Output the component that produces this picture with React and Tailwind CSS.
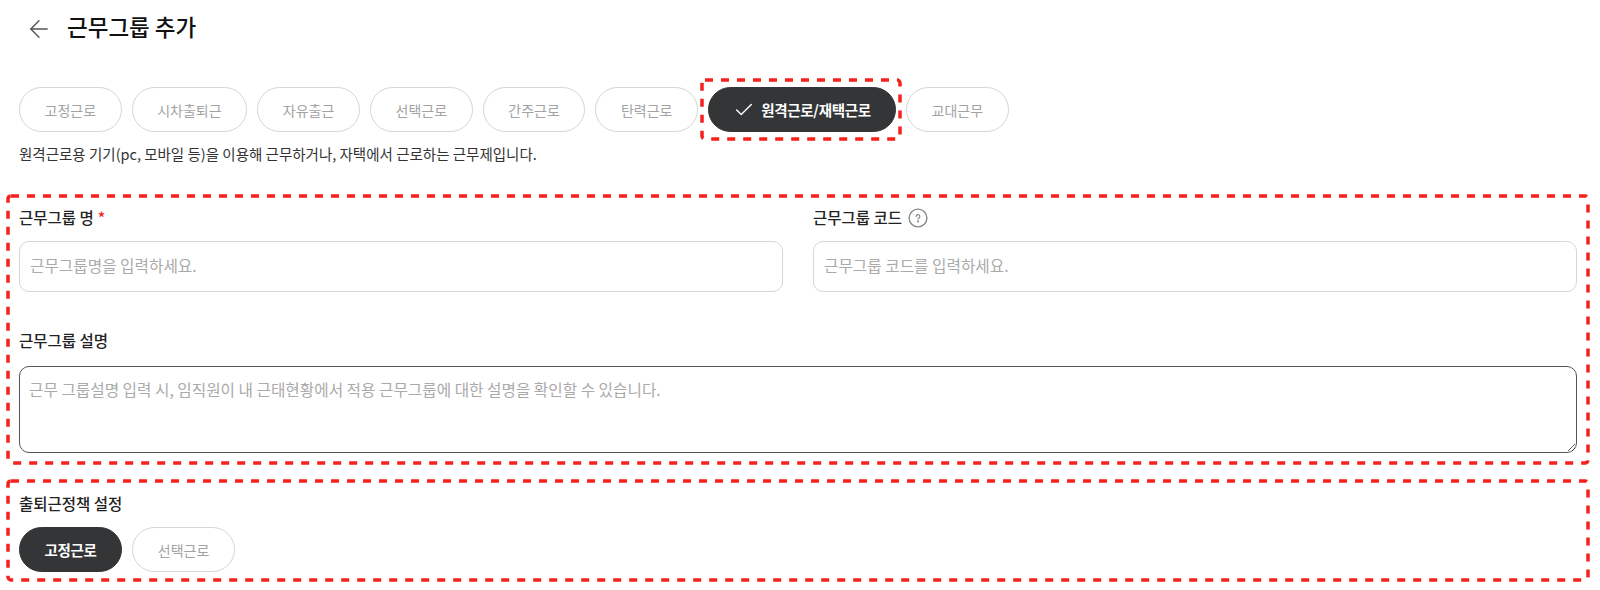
import React from "react";
import { ArrowLeft, Check } from "lucide-react";

const Dashed = ({ className }) => (
  <svg className={`absolute pointer-events-none overflow-visible ${className}`} fill="none" aria-hidden="true">
    <rect x="0" y="0" width="100%" height="100%" rx="3" stroke="#f5211a" strokeWidth="3.5" strokeDasharray="8 8" />
  </svg>
);

const Pill = ({ children, active, check }) => (
  <button
    className={
      active
        ? check
          ? "h-[45px] flex items-center justify-center gap-[6px] rounded-full border border-[#343537] bg-[#343537] px-[24px] pt-[1px] text-[14.5px] font-bold tracking-[-0.3px] text-white"
          : "h-[45px] flex items-center justify-center rounded-full border border-[#343537] bg-[#343537] px-[24.5px] pt-[1px] text-[14.5px] font-bold tracking-[-0.3px] text-white"
        : "h-[45px] flex items-center justify-center rounded-full border-[1.5px] border-[#d6d6d6] bg-white px-[24.5px] pt-[1px] text-[14px] text-[#a3a3a3]"
    }
  >
    {check && <Check size={22} strokeWidth={1.5} />}
    {children}
  </button>
);

const labels = ["고정근로", "시차출퇴근", "자유출근", "선택근로", "간주근로", "탄력근로"];

export default function App() {
  return (
    <div className="h-[590px] w-[1600px] overflow-hidden bg-white pl-[19px] pr-[23px] text-[#222] font-['Noto_Sans_CJK_KR','Noto_Sans',sans-serif]">
      <header className="flex h-[53px] items-center pl-[6px]">
        <ArrowLeft size={28} strokeWidth={1.2} className="mt-[4px] text-[#555]" />
        <h1 className="ml-[14px] text-[22.5px] font-medium leading-none text-[#111]">근무그룹 추가</h1>
      </header>

      <div className="mt-[34px] flex gap-[10.2px]">
        {labels.map((l) => (
          <Pill key={l}>{l}</Pill>
        ))}
        <div className="relative">
          <Pill active check>원격근로/재택근로</Pill>
          <Dashed className="-left-[6px] -top-[7px] h-[59px] w-[198px]" />
        </div>
        <Pill>교대근무</Pill>
      </div>

      <p className="mt-[11px] text-[14.5px] leading-[21px] text-[#333]">
        원격근로용 기기(pc, 모바일 등)을 이용해 근무하거나, 자택에서 근로하는 근무제입니다.
      </p>

      <section className="relative mt-[32px] pt-[12px]">
        <Dashed className="-left-[11px] top-0 h-[267px] w-[1580px]" />
        <div className="grid grid-cols-2 gap-[30px]">
          <div>
            <label className="flex h-[20px] items-center text-[15.5px] font-medium text-[#222]">
              근무그룹 명<span className="ml-[4px] text-[#f5211a]">*</span>
            </label>
            <input
              className="mt-[13px] h-[51px] w-full rounded-[10px] border-[1.5px] border-[#d6d6d6] px-[10px] pb-[2px] text-[15.7px] placeholder:text-[#aaa] outline-none"
              placeholder="근무그룹명을 입력하세요."
            />
          </div>
          <div>
            <label className="flex h-[20px] items-center gap-[6px] text-[15.5px] font-medium text-[#222]">
              근무그룹 코드
              <svg width="20" height="20" viewBox="0 0 20 20" fill="none" stroke="#888" strokeWidth="1.4">
                <circle cx="10" cy="10" r="8.9" />
                <path d="M8.2 8.4a1.8 1.8 0 1 1 2.7 1.5c-.6.35-.9.6-.9 1.2" strokeLinecap="round" strokeWidth="1.2" />
                <circle cx="10" cy="13.4" r=".35" fill="#888" />
              </svg>
            </label>
            <input
              className="mt-[13px] h-[51px] w-full rounded-[10px] border-[1.5px] border-[#d6d6d6] px-[10px] pb-[2px] text-[15.7px] placeholder:text-[#aaa] outline-none"
              placeholder="근무그룹 코드를 입력하세요."
            />
          </div>
        </div>
        <label className="mt-[39px] flex h-[20px] items-center text-[15.5px] font-medium text-[#222]">근무그룹 설명</label>
        <textarea
          className="mt-[15px] block h-[87px] w-full rounded-[10px] border-[1.5px] border-[#555] px-[9px] pt-[11px] text-[15.7px] placeholder:text-[#aaa] outline-none"
          placeholder="근무 그룹설명 입력 시, 임직원이 내 근태현황에서 적용 근무그룹에 대한 설명을 확인할 수 있습니다."
        />
      </section>

      <section className="relative mt-[28px] pt-[13px]">
        <Dashed className="-left-[11px] top-0 h-[99px] w-[1580px]" />
        <label className="flex h-[20px] items-center text-[15.5px] font-medium text-[#222]">출퇴근정책 설정</label>
        <div className="mt-[13px] flex gap-[10.2px]">
          <Pill active>고정근로</Pill>
          <Pill>선택근로</Pill>
        </div>
      </section>
    </div>
  );
}
